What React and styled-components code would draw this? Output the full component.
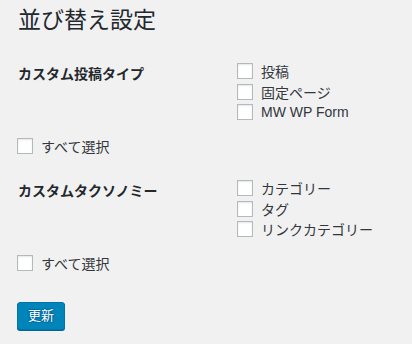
import React from "react";
import styled, { createGlobalStyle } from "styled-components";

const GlobalStyle = createGlobalStyle`
  html, body {
    margin: 0;
    padding: 0;
    background: #f1f1f1;
  }
  body {
    font-family: "Liberation Sans", "Noto Sans CJK JP", sans-serif;
    color: #23282d;
  }
`;

const sections = [
  {
    label: "カスタム投稿タイプ",
    items: ["投稿", "固定ページ", "MW WP Form"],
  },
  {
    label: "カスタムタクソノミー",
    items: ["カテゴリー", "タグ", "リンクカテゴリー"],
  },
];

const App = () => {
  return (
    <Wrap>
      <GlobalStyle />
      <Title>並び替え設定</Title>
      {sections.map((s, i) => (
        <React.Fragment key={s.label}>
          <Section $first={i === 0}>
            <SectionLabel>{s.label}</SectionLabel>
            <CheckList>
              {s.items.map((item) => (
                <CheckRow key={item}>
                  <Box type="checkbox" />
                  <span>{item}</span>
                </CheckRow>
              ))}
            </CheckList>
          </Section>
          <SelectAll>
            <Box type="checkbox" />
            <span>すべて選択</span>
          </SelectAll>
        </React.Fragment>
      ))}
      <Button type="button">更新</Button>
    </Wrap>
  );
};

const Wrap = styled.div`
  width: 412px;
  height: 344px;
  box-sizing: border-box;
  padding: 6px 0 0 18px;
  display: flex;
  flex-direction: column;
  align-items: flex-start;
  overflow: hidden;
`;

const Title = styled.h1`
  margin: 0;
  font-size: 23px;
  line-height: 29px;
  font-weight: 400;
  color: #23282d;
`;

const Section = styled.div`
  display: flex;
  align-items: flex-start;
  margin-top: ${(p) => (p.$first ? "26px" : "21.5px")};
`;

const SectionLabel = styled.div`
  width: 219px;
  padding-top: 4px;
  font-size: 14px;
  line-height: 18px;
  font-weight: 700;
  color: #23282d;
`;

const CheckList = styled.div`
  display: flex;
  flex-direction: column;
`;

const CheckRow = styled.label`
  display: flex;
  align-items: center;
  gap: 8px;
  height: 20.5px;
  font-size: 14px;
  color: #32373c;
`;

const SelectAll = styled(CheckRow)`
  margin-top: 13.5px;
  margin-left: -1px;
`;

const Box = styled.input`
  appearance: none;
  margin: 0;
  width: 16px;
  height: 16px;
  box-sizing: border-box;
  border: 1px solid #b4b9be;
  background: #fff;
  box-shadow: inset 0 1px 2px rgba(0, 0, 0, 0.1);
`;

const Button = styled.button`
  margin-top: 28.5px;
  margin-left: -1px;
  height: 28px;
  padding: 0 10px;
  border: 1px solid #0073aa;
  border-radius: 3px;
  background: #0085ba;
  box-shadow: 0 1px 0 #006799;
  color: #fff;
  font-family: "Liberation Sans", "Noto Sans CJK JP", sans-serif;
  font-size: 13px;
  line-height: 26px;
  text-shadow: 0 -1px 1px #006799, 1px 0 1px #006799, 0 1px 1px #006799,
    -1px 0 1px #006799;
  cursor: pointer;
`;

export default App;
